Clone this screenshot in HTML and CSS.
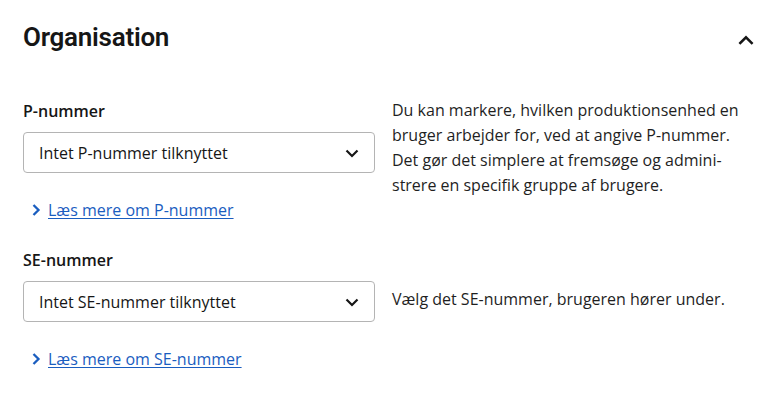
FILE: index.html
```html
<!DOCTYPE html>
<html lang="da">
<head>
<meta charset="utf-8">
<title>Organisation</title>
<link rel="stylesheet" href="styles.css">
</head>
<body>
<section class="panel">
  <header class="panel-header">
    <h2 class="panel-title">Organisation</h2>
    <button class="collapse-btn" type="button" aria-label="Skjul">
      <svg class="icon" width="24" height="24" viewBox="0 0 24 24" aria-hidden="true"><path d="M6.3 15l5.7-5.7 5.7 5.7" fill="none" stroke="#161616" stroke-width="2.5" stroke-linecap="square"/></svg>
    </button>
  </header>

  <div class="field">
    <div class="field-main">
      <label class="field-label" for="pnr">P-nummer</label>
      <div class="select" id="pnr">
        <span class="select-value">Intet P-nummer tilknyttet</span>
        <svg class="icon" width="24" height="24" viewBox="0 0 24 24" aria-hidden="true"><path d="M6.5 9.5l5.5 5.5 5.5-5.5" fill="none" stroke="#161616" stroke-width="2.2"/></svg>
      </div>
      <a class="more-link" href="#">
        <svg width="16" height="16" viewBox="0 0 16 16" aria-hidden="true"><path d="M5.5 3l5 5-5 5" fill="none" stroke="#1a5dbf" stroke-width="2.3"/></svg>
        <span class="more-text">Læs mere om P-nummer</span>
      </a>
    </div>
    <p class="field-help field-help-top">Du kan markere, hvilken produktionsenhed en bruger arbejder for, ved at angive P-nummer. Det gør det simplere at fremsøge og admini&shy;strere en specifik gruppe af brugere.</p>
  </div>

  <div class="field field-second">
    <div class="field-main">
      <label class="field-label" for="senr">SE-nummer</label>
      <div class="select" id="senr">
        <span class="select-value">Intet SE-nummer tilknyttet</span>
        <svg class="icon" width="24" height="24" viewBox="0 0 24 24" aria-hidden="true"><path d="M6.5 9.5l5.5 5.5 5.5-5.5" fill="none" stroke="#161616" stroke-width="2.2"/></svg>
      </div>
      <a class="more-link" href="#">
        <svg width="16" height="16" viewBox="0 0 16 16" aria-hidden="true"><path d="M5.5 3l5 5-5 5" fill="none" stroke="#1a5dbf" stroke-width="2.3"/></svg>
        <span class="more-text">Læs mere om SE-nummer</span>
      </a>
    </div>
    <p class="field-help field-help-centered">Vælg det SE-nummer, brugeren hører under.</p>
  </div>
</section>
</body>
</html>
```
FILE: styles.css
```css
* { box-sizing: border-box; }

html, body {
  margin: 0;
  padding: 0;
  background: #ffffff;
}

body {
  font-family: "Open Sans", "Noto Sans", sans-serif;
  font-size: 16px;
  color: #161616;
}

.panel {
  padding: 0 10px 0 23px;
}

.panel-header {
  display: flex;
  justify-content: space-between;
  align-items: center;
  height: 74px;
  margin-bottom: 21px;
}

.panel-title {
  margin: 0;
  font-family: Roboto, "Open Sans", sans-serif;
  font-size: 26px;
  font-weight: 600;
  line-height: 32px;
  letter-spacing: -0.25px;
  color: #161616;
}

.collapse-btn {
  display: flex;
  align-items: center;
  justify-content: center;
  width: 24px;
  height: 24px;
  padding: 0;
  margin: 6px 0 0 0;
  border: 0;
  background: transparent;
  cursor: pointer;
}

.icon { display: block; flex: none; }

.field {
  display: grid;
  grid-template-columns: 352px 353px;
  column-gap: 17px;
  align-items: start;
}

.field-second {
  margin-top: 22px;
}

.field-main {
  display: flex;
  flex-direction: column;
  align-items: flex-start;
  padding-top: 4px;
}

.field-label {
  font-weight: 600;
  line-height: 24px;
  margin-bottom: 9px;
}

.select {
  display: flex;
  align-items: center;
  justify-content: space-between;
  width: 352px;
  height: 41px;
  padding: 0 10px 0 15px;
  border: 1px solid #b4b4b4;
  border-radius: 4px;
  background: #ffffff;
}

.select-value {
  line-height: 24px;
}

.more-link {
  display: inline-flex;
  align-items: center;
  gap: 4px;
  margin: 25px 0 0 5px;
  line-height: 24px;
  color: #1a5dbf;
  text-decoration: none;
}

.more-link svg { display: block; flex: none; }

.more-text {
  text-decoration: underline;
  text-underline-offset: 2px;
  text-decoration-thickness: 1px;
}

.field-help {
  margin: 0;
  line-height: 25px;
  color: #1f1f1f;
}

.field-help-top {
  margin-top: 3px;
}

.field-help-centered {
  margin-top: 43px;
}
```
